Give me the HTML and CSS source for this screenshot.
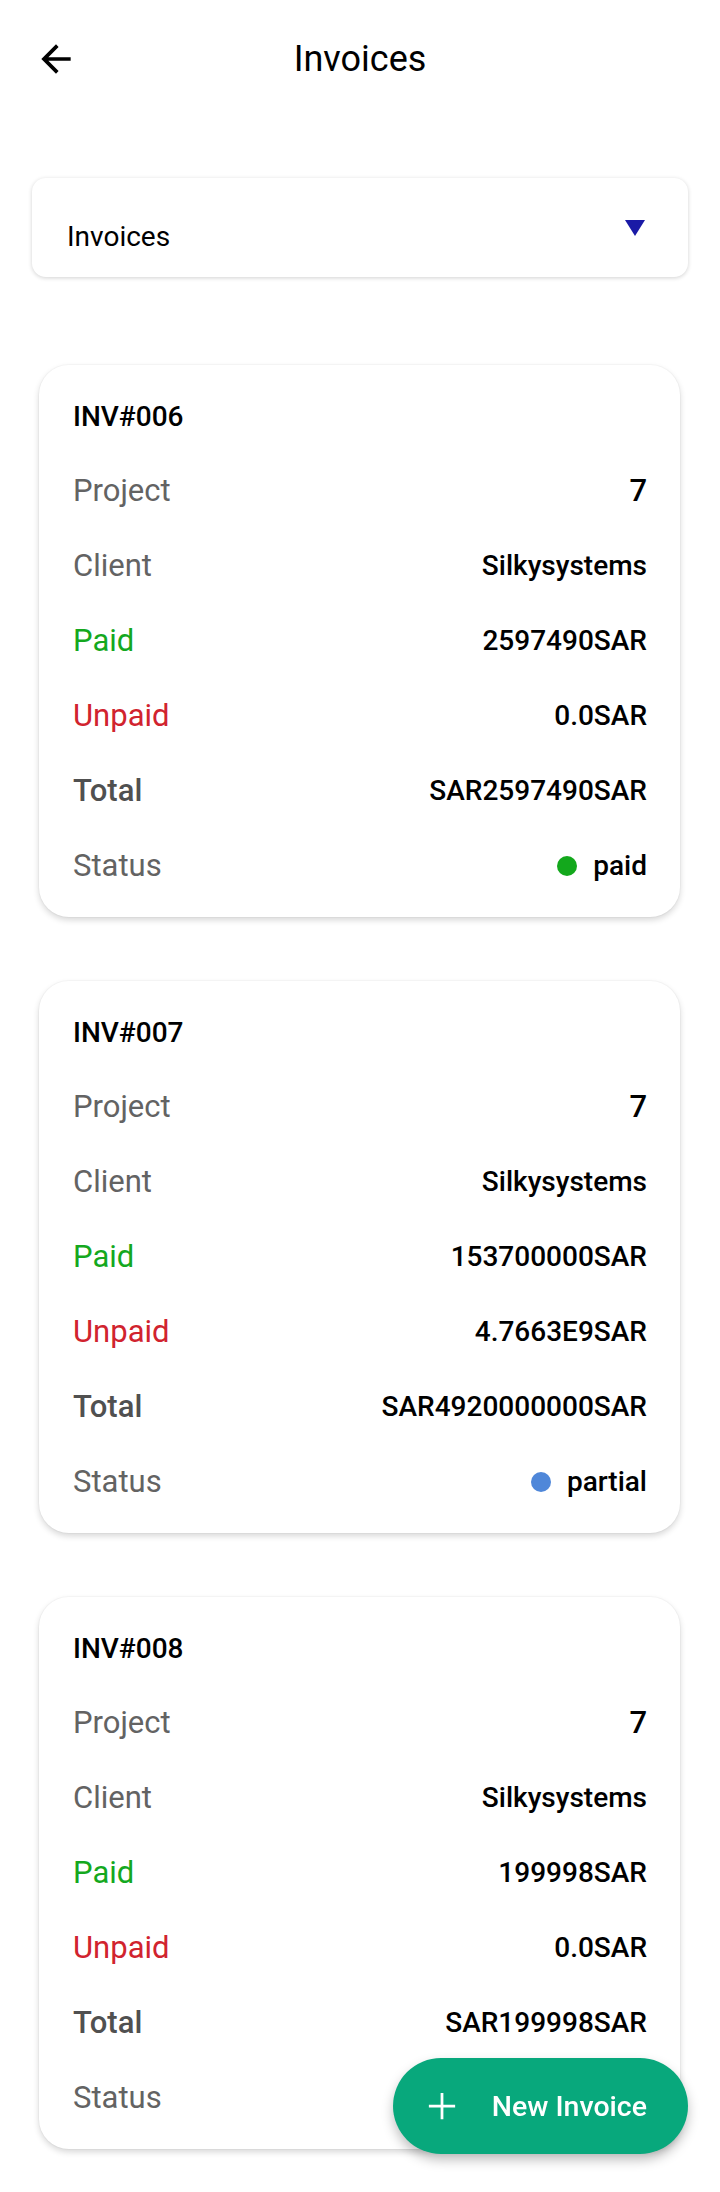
FILE: index.html
```html
<!DOCTYPE html>
<html lang="en">
<head>
    <meta charset="UTF-8">
    <meta name="viewport" content="width=device-width, initial-scale=1.0">
    <title>Invoices</title>
    <link rel="stylesheet" href="styles.css">
</head>
<body>

<header class="app-bar">
    <button class="back-btn" aria-label="Back">
        <svg viewBox="0 0 24 24" width="44" height="44">
            <path d="M20 11H7.83l5.59-5.59L12 4l-8 8 8 8 1.41-1.41L7.83 13H20v-2z" fill="#000"/>
        </svg>
    </button>
    <h1 class="app-title">Invoices</h1>
    <span></span>
</header>

<main class="content">
    <!-- Filter -->
    <div class="dropdown">
        <span class="dropdown-label">Invoices</span>
        <span class="dropdown-arrow"></span>
    </div>

    <!-- Invoice list -->
    <div class="invoice-list">
        <div class="invoice-card">
            <div class="invoice-no">INV#006</div>
            <div class="row"><span class="label">Project</span><span class="value big">7</span></div>
            <div class="row"><span class="label">Client</span><span class="value">Silkysystems</span></div>
            <div class="row"><span class="label paid">Paid</span><span class="value">2597490SAR</span></div>
            <div class="row"><span class="label unpaid">Unpaid</span><span class="value">0.0SAR</span></div>
            <div class="row"><span class="label total">Total</span><span class="value">SAR2597490SAR</span></div>
            <div class="row"><span class="label">Status</span><span class="value status"><i class="dot dot-paid"></i>paid</span></div>
        </div>

        <div class="invoice-card">
            <div class="invoice-no">INV#007</div>
            <div class="row"><span class="label">Project</span><span class="value big">7</span></div>
            <div class="row"><span class="label">Client</span><span class="value">Silkysystems</span></div>
            <div class="row"><span class="label paid">Paid</span><span class="value">153700000SAR</span></div>
            <div class="row"><span class="label unpaid">Unpaid</span><span class="value">4.7663E9SAR</span></div>
            <div class="row"><span class="label total">Total</span><span class="value">SAR4920000000SAR</span></div>
            <div class="row"><span class="label">Status</span><span class="value status"><i class="dot dot-partial"></i>partial</span></div>
        </div>

        <div class="invoice-card">
            <div class="invoice-no">INV#008</div>
            <div class="row"><span class="label">Project</span><span class="value big">7</span></div>
            <div class="row"><span class="label">Client</span><span class="value">Silkysystems</span></div>
            <div class="row"><span class="label paid">Paid</span><span class="value">199998SAR</span></div>
            <div class="row"><span class="label unpaid">Unpaid</span><span class="value">0.0SAR</span></div>
            <div class="row"><span class="label total">Total</span><span class="value">SAR199998SAR</span></div>
            <!-- status value sits under the FAB -->
            <div class="row"><span class="label">Status</span></div>
        </div>
    </div>
</main>

<button class="fab">
    <svg viewBox="0 0 24 24" width="30" height="30">
        <path d="M12 1.5v21M1.5 12h21" stroke="#fff" stroke-width="2.2" fill="none"/>
    </svg>
    <span>New Invoice</span>
</button>

</body>
</html>
```

FILE: styles.css
```css
body {
    font-family: Roboto, "Noto Sans", Arial, sans-serif;
    margin: 0;
    padding: 0;
    background-color: #fff;
    color: #000;
}

.app-bar {
    height: 118px;
    display: grid;
    grid-template-columns: 1fr auto 1fr;
    align-items: center;
    padding: 0 34px;
}

.back-btn {
    justify-self: start;
    background: none;
    border: none;
    padding: 0;
    display: flex;
    cursor: pointer;
}

.app-title {
    margin: 0;
    font-size: 36px;
    font-weight: 400;
}

.content {
    padding: 0 32px;
}

.dropdown {
    margin-top: 60px;
    height: 99px;
    box-sizing: border-box;
    display: flex;
    justify-content: space-between;
    align-items: center;
    padding: 0 43px 0 35px;
    background: #fff;
    border-radius: 14px;
    box-shadow: 0 1px 4px rgba(0, 0, 0, 0.18);
}

.dropdown-label {
    font-size: 28px;
    padding-top: 17px;
}

.dropdown-arrow {
    width: 0;
    height: 0;
    border-left: 10px solid transparent;
    border-right: 10px solid transparent;
    border-top: 16px solid #1a1aa6;
}

.invoice-list {
    margin-top: 88px;
    padding: 0 8px 0 7px;
}

.invoice-card {
    background: #fff;
    border-radius: 30px;
    padding: 34px 33px 14px 34px;
    margin-bottom: 64px;
    box-shadow: 0 3px 6px rgba(0, 0, 0, 0.16), 0 0 0 1px rgba(0, 0, 0, 0.025);
}

.invoice-no {
    font-size: 28px;
    font-weight: 480;
    line-height: 36px;
    margin-bottom: 18px;
}

.row {
    height: 75px;
    display: flex;
    justify-content: space-between;
    align-items: center;
}

.label {
    font-size: 31px;
    color: #636363;
}

.label.paid {
    color: #14a81e;
}

.label.unpaid {
    color: #d1232e;
}

.label.total {
    color: #505050;
    font-weight: 500;
}

.value {
    font-size: 28px;
    font-weight: 480;
}

.value.big {
    font-size: 31px;
}

.status {
    display: flex;
    align-items: center;
    gap: 16px;
}

.dot {
    width: 20px;
    height: 20px;
    border-radius: 50%;
}

.dot-paid {
    background-color: #13a81c;
}

.dot-partial {
    background-color: #4f87d9;
}

.fab {
    position: fixed;
    right: 32px;
    bottom: 38px;
    height: 96px;
    border: none;
    border-radius: 48px;
    padding: 0 41px 0 34px;
    display: flex;
    align-items: center;
    gap: 35px;
    background-color: #08a87c;
    color: #fff;
    font-family: Roboto, "Noto Sans", Arial, sans-serif;
    font-size: 28.5px;
    font-weight: 500;
    box-shadow: 0 6px 12px rgba(0, 0, 0, 0.25);
    cursor: pointer;
}
```
